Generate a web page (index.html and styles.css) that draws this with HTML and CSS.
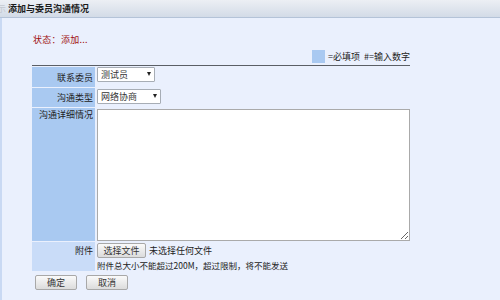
FILE: index.html
```html
<!DOCTYPE html>
<html lang="zh-CN">
<head>
<meta charset="utf-8">
<title>添加与委员沟通情况</title>
<link rel="stylesheet" href="styles.css">
</head>
<body>
<div class="titlebar"><span class="ghost">示</span><span class="title">添加与委员沟通情况</span></div>
<div class="main">
  <div class="status">状态：添加...</div>
  <div class="legend"><span class="swatch"></span><span>=必填项&nbsp;&nbsp;#=输入数字</span></div>
  <div class="form">
    <div class="label r1">联系委员</div>
    <div class="value r1"><span class="sel w1"><select><option>测试员</option></select></span></div>
    <div class="label r2">沟通类型</div>
    <div class="value r2"><span class="sel w2"><select><option>网络协商</option></select></span></div>
    <div class="label r3 top">沟通详细情况</div>
    <div class="value r3"><textarea></textarea></div>
    <div class="label r4 light">附件</div>
    <div class="value r4">
      <div class="file"><button class="btn filebtn">选择文件</button><span>未选择任何文件</span></div>
      <div class="note">附件总大小不能超过200M，超过限制，将不能发送</div>
    </div>
  </div>
  <div class="actions"><button class="btn act">确定</button><button class="btn act">取消</button></div>
</div>
</body>
</html>
```
FILE: styles.css
```css
html, body { margin: 0; padding: 0; height: 100%; }
body {
  font-family: "Noto Sans CJK SC", "Noto Sans", sans-serif;
  font-size: 9px;
  color: #222;
  background: #eaf0fd;
}
.titlebar {
  height: 17px;
  line-height: 17px;
  background: linear-gradient(#eceff4, #d3dbe7);
  border-bottom: 1px solid #b4c3d8;
  white-space: nowrap;
  overflow: hidden;
}
.ghost {
  display: inline-block;
  width: 6px;
  overflow: hidden;
  direction: rtl;
  color: #c5c9d0;
  vertical-align: top;
  margin-right: 2px;
}
.title { font-weight: bold; color: #1a1a1a; }
.main {
  border-left: 2px solid #c9d9f3;
  height: 282px;
  box-sizing: border-box;
  padding-left: 30px;
  padding-top: 16px;
  background: #eaf0fd;
}
.status { color: #a01010; height: 12px; line-height: 12px; margin-left: 1px; letter-spacing: 0.3px; }
.legend {
  width: 378px;
  display: flex;
  justify-content: flex-end;
  align-items: center;
  gap: 3px;
  margin-top: 3px;
  height: 14px;
  padding-bottom: 2px;
  border-bottom: 1px solid #5b5f66;
  color: #222;
}
.swatch { width: 13px; height: 13px; background: #a9c9f1; }
.form {
  width: 378px;
  margin-top: 1px;
  display: grid;
  grid-template-columns: 63px 1fr;
  grid-template-rows: 20px 19px 133px 29px;
  column-gap: 1px;
  row-gap: 1px;
}
.label {
  background: #a9c9f1;
  text-align: right;
  padding-right: 2px;
  display: flex;
  align-items: center;
  justify-content: flex-end;
}
.label.top { align-items: flex-start; padding-top: 1px; line-height: 12px; }
.label.light { background: #c9dcf8; align-items: flex-start; padding-top: 2px; }
.value { padding-left: 1px; display: flex; flex-direction: column; }
.value.r1 { padding-top: 0; }
.value.r2 { padding-top: 1px; }
.sel { position: relative; display: inline-block; height: 15px; }
.sel.w1 { width: 58px; }
.sel.w2 { width: 64px; }
.sel select {
  appearance: none;
  -webkit-appearance: none;
  width: 100%;
  height: 15px;
  margin: 0;
  padding: 0 0 0 3px;
  border: 1px solid #a7adb5;
  border-radius: 1px;
  background: #fff;
  font-family: inherit;
  font-size: 9px;
  color: #333;
  box-sizing: border-box;
}
.sel::after {
  content: "";
  position: absolute;
  right: 4px;
  top: 5px;
  border-left: 2.5px solid transparent;
  border-right: 2.5px solid transparent;
  border-top: 4px solid #222;
  pointer-events: none;
}
textarea {
  width: 313px;
  height: 132px;
  margin: 1px 0 0 0;
  box-sizing: border-box;
  border: 1px solid #aaaaaa;
  background: #fff;
  resize: both;
  font-family: inherit;
}
.file { display: flex; align-items: center; gap: 3px; height: 16px; }
.btn {
  font-family: inherit;
  font-size: 9px;
  color: #333;
  background: linear-gradient(#fafafa, #dcdcdc);
  border: 1px solid #a8a8a8;
  border-radius: 2px;
  padding: 0;
  box-sizing: border-box;
  height: 15px;
}
.filebtn { width: 49px; }
.note { color: #222; line-height: 12px; margin-top: 1px; font-size: 8.5px; }
.actions { display: flex; gap: 9px; margin-top: 4px; padding-left: 3px; }
.act { width: 42px; height: 15px; }
```
